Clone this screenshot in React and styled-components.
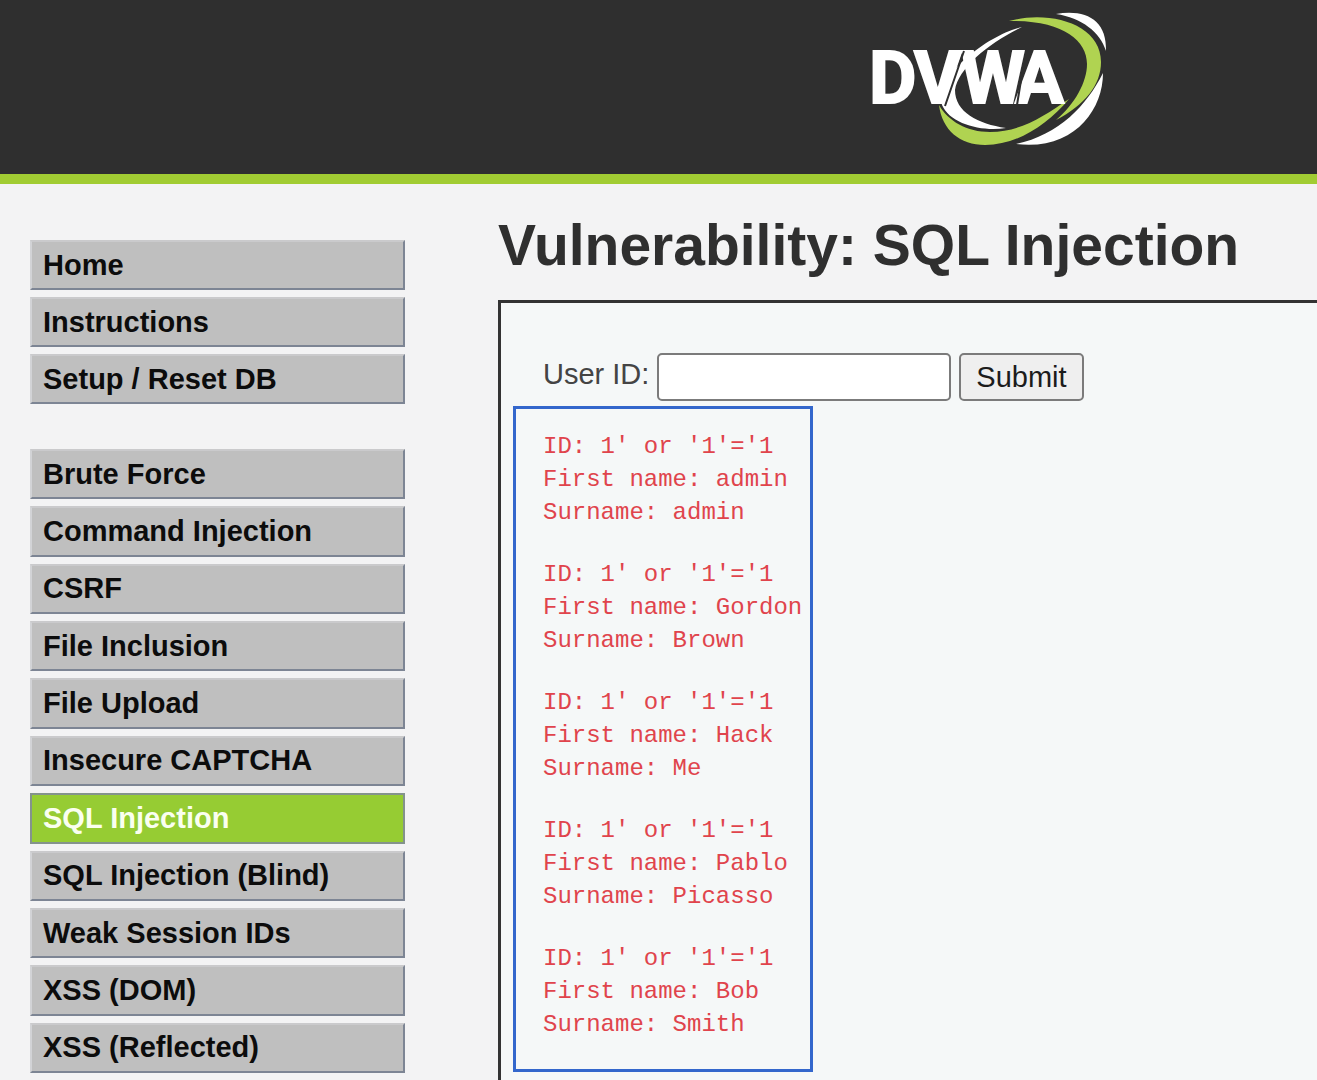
import React from "react";
import styled, { createGlobalStyle } from "styled-components";

const GlobalStyle = createGlobalStyle`
  * { box-sizing: border-box; }
  body {
    margin: 0;
    background: #f3f3f4;
    color: #2f2f2f;
    font-family: "Liberation Sans", Arial, sans-serif;
    font-size: 29px;
  }
`;

const Page = styled.div`
  display: flex;
  flex-direction: column;
  min-height: 100vh;
  overflow-x: hidden;
`;

const Header = styled.header`
  display: flex;
  padding-left: 65%;
  background: #2f2f2f;
  border-bottom: 10px solid #a1cc33;
`;

const Logo = styled.svg`
  display: block;
  flex: none;
  width: 260px;
  height: 174px;
`;

const LogoText = styled.text`
  font-family: Roboto, "Liberation Sans", sans-serif;
  font-size: 73px;
  font-weight: 700;
  fill: #fff;
  stroke: #fff;
  stroke-width: 2px;
`;

const Columns = styled.div`
  flex: 1;
  display: flex;
`;

const Sidebar = styled.nav`
  flex: none;
  display: flex;
  flex-direction: column;
  gap: 45px;
  width: 498px;
  padding: 56px 93px 7px 30px;
`;

const Menu = styled.ul`
  display: grid;
  grid-auto-rows: minmax(50px, 1fr);
  gap: 7px;
  flex: ${(p) => (p.$fill ? 1 : "none")};
  margin: 0;
  padding: 0;
  list-style: none;
`;

const MenuItem = styled.li`
  display: flex;
`;

const MenuLink = styled.a`
  flex: 1;
  display: flex;
  align-items: center;
  padding-left: 11px;
  border: 2px solid;
  border-color: ${(p) => (p.$active ? "#84938c" : "#cacacc #7d8594 #7d8594 #d2d3d6")};
  background: ${(p) => (p.$active ? "#96cc33" : "#bfbfbf")};
  color: ${(p) => (p.$active ? "#fafff0" : "#0c0c0c")};
  font-weight: bold;
  text-decoration: none;
`;

const Main = styled.main`
  flex: 1;
  min-width: 0;
  display: flex;
  flex-direction: column;
  padding-top: 29px;
`;

const Title = styled.h1`
  margin: 0 0 23px;
  font-size: 57px;
  line-height: 64px;
  white-space: nowrap;
`;

const Panel = styled.section`
  flex: 1;
  padding: 50px 12px 8px;
  border: solid #333;
  border-width: 3px 0 0 3px;
  background: #f5f8f8;
`;

const Form = styled.form`
  display: flex;
  align-items: center;
  gap: 8px;
  margin-bottom: 5px;
  padding-left: 30px;
`;

const Label = styled.label`
  padding-bottom: 5px;
  color: #444;
  white-space: nowrap;
`;

const TextBox = styled.input`
  width: 294px;
  height: 48px;
  padding: 4px;
  border: 2px solid #7b7b7b;
  border-radius: 5px;
  background: #fff;
  font: inherit;
`;

const SubmitButton = styled.button`
  height: 48px;
  padding: 0 15px;
  border: 2px solid #7b7b7b;
  border-radius: 5px;
  background: #efefef;
  color: #1c1c1c;
  font: inherit;
`;

const Results = styled.div`
  display: flex;
  flex-direction: column;
  gap: 29px;
  width: fit-content;
  padding: 21px 8px 28px 27px;
  border: 3px solid #3367cc;
`;

const Record = styled.pre`
  margin: 0;
  color: #e0444c;
  font-family: "Liberation Mono", "Courier New", monospace;
  font-size: 24px;
  line-height: 33px;
`;

const setupLinks = ["Home", "Instructions", "Setup / Reset DB"];

const attackLinks = [
  "Brute Force",
  "Command Injection",
  "CSRF",
  "File Inclusion",
  "File Upload",
  "Insecure CAPTCHA",
  "SQL Injection",
  "SQL Injection (Blind)",
  "Weak Session IDs",
  "XSS (DOM)",
  "XSS (Reflected)",
];

const users = [
  ["admin", "admin"],
  ["Gordon", "Brown"],
  ["Hack", "Me"],
  ["Pablo", "Picasso"],
  ["Bob", "Smith"],
];

const query = "1' or '1'='1";

function MenuList({ items, current, fill }) {
  return (
    <Menu $fill={fill}>
      {items.map((item) => (
        <MenuItem key={item}>
          <MenuLink
            href="#"
            $active={item === current}
            aria-current={item === current ? "page" : undefined}
          >
            {item}
          </MenuLink>
        </MenuItem>
      ))}
    </Menu>
  );
}

function DvwaLogo() {
  return (
    <Logo viewBox="-4 0 260 174" role="img" aria-label="DVWA">
      <path fill="#fff" d="M162 27C128 35 74 76 82 105C90 124 122 132 146 128C118 124 95 112 95 90C98 68 130 42 162 27Z" />
      <path fill="#fff" d="M196 14C226 9 247 20 246 51C240 32 222 18 196 14Z" />
      <path fill="#fff" d="M243 73C243 111 213 151 156 144C199 135 227 105 243 73Z" />
      <path fill="#b0d351" d="M149 21C190 10 241 24 241 62C241 85 225 105 196 120C215 104 227 82 227 64C227 40 202 20 149 21Z" />
      <path fill="#b0d351" d="M79 105C82 130 100 145 125 145C157 145 187 125 209 99C183 117 160 132 130 132C107 132 88 121 79 105Z" />
      <LogoText x="9 54 101 155" y="103">DVWA</LogoText>
      <path stroke="#2f2f2f" strokeWidth="2" d="M104 51L85 106M163 68L157 105" fill="none" />
    </Logo>
  );
}

export default function App() {
  return (
    <Page>
      <GlobalStyle />
      <Header>
        <DvwaLogo />
      </Header>
      <Columns>
        <Sidebar>
          <MenuList items={setupLinks} />
          <MenuList items={attackLinks} current="SQL Injection" fill />
        </Sidebar>
        <Main>
          <Title>Vulnerability: SQL Injection</Title>
          <Panel>
            <Form onSubmit={(e) => e.preventDefault()}>
              <Label htmlFor="user-id">User ID:</Label>
              <TextBox id="user-id" type="text" />
              <SubmitButton type="submit">Submit</SubmitButton>
            </Form>
            <Results>
              {users.map(([first, last]) => (
                <Record key={first}>
                  {`ID: ${query}\nFirst name: ${first}\nSurname: ${last}`}
                </Record>
              ))}
            </Results>
          </Panel>
        </Main>
      </Columns>
    </Page>
  );
}
